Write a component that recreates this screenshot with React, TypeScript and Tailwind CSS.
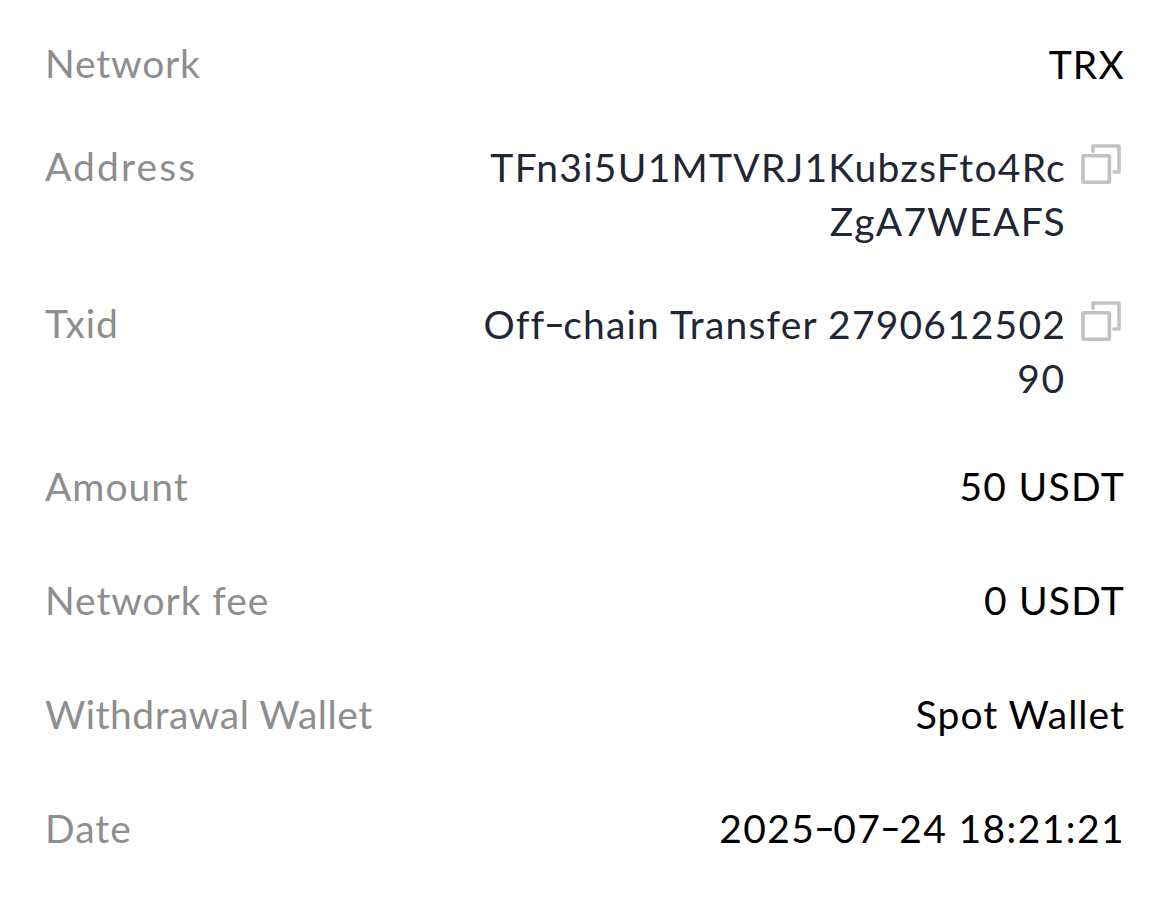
import { useState } from "react";

interface Detail {
  label: string;
  lines: string[];
  copyable?: boolean;
  rowClass: string;
  labelClass: string;
  lineClasses: string[];
}

const details: Detail[] = [
  {
    label: "Network",
    lines: ["TRX"],
    rowClass: "",
    labelClass: "-mt-px tracking-[0.8px]",
    lineClasses: ["tracking-[1.2px]"],
  },
  {
    label: "Address",
    lines: ["TFn3i5U1MTVRJ1KubzsFto4Rc", "ZgA7WEAFS"],
    copyable: true,
    rowClass: "mt-[49px]",
    labelClass: "-mt-px tracking-[2.1px]",
    lineClasses: ["-mr-px tracking-[1.27px]", "-mr-px tracking-[1.35px]"],
  },
  {
    label: "Txid",
    lines: ["Off-chain Transfer 2790612502", "90"],
    copyable: true,
    rowClass: "mt-[49px]",
    labelClass: "-mt-px tracking-[0.9px]",
    lineClasses: ["-mr-px tracking-[1.17px]", "-mr-px tracking-[1.8px]"],
  },
  {
    label: "Amount",
    lines: ["50 USDT"],
    rowClass: "mt-[54px]",
    labelClass: "tracking-[1px]",
    lineClasses: ["tracking-[1.3px]"],
  },
  {
    label: "Network fee",
    lines: ["0 USDT"],
    rowClass: "mt-[60px]",
    labelClass: "tracking-[0.9px]",
    lineClasses: ["tracking-[1.2px]"],
  },
  {
    label: "Withdrawal Wallet",
    lines: ["Spot Wallet"],
    rowClass: "mt-[60px]",
    labelClass: "tracking-[0.5px]",
    lineClasses: ["tracking-[1px]"],
  },
  {
    label: "Date",
    lines: ["2025-07-24 18:21:21"],
    rowClass: "mt-[60px]",
    labelClass: "tracking-[1px]",
    lineClasses: ["tracking-[1.4px]"],
  },
];

function CopyIcon() {
  return (
    <svg
      viewBox="0 0 40 40"
      className="block size-10"
      fill="none"
      stroke="#c2c2c2"
      strokeWidth="3.6"
      strokeLinecap="round"
      strokeLinejoin="round"
    >
      <rect x="2" y="11.8" width="26.4" height="26.4" rx="0.6" />
      <path d="M12 7.2V2H38V28H33" />
    </svg>
  );
}

// Hyphens are drawn wide and centred on the cap height
function Value({ text }: { text: string }) {
  const parts = text.split("-");
  return (
    <>
      {parts.map((part, i) => (
        <span key={i}>
          {i > 0 && (
            <span className="mx-[1.7px] inline-block -translate-y-0.5 scale-x-150 tracking-normal">
              -
            </span>
          )}
          {part}
        </span>
      ))}
    </>
  );
}

function DetailRow({ detail }: { detail: Detail }) {
  const [copied, setCopied] = useState(false);

  async function copy() {
    await navigator.clipboard.writeText(detail.lines.join(""));
    setCopied(true);
  }

  return (
    <div className={`flex items-start justify-between ${detail.rowClass}`}>
      <dt className={`text-[#8e8e8e] ${detail.labelClass}`}>{detail.label}</dt>
      <dd className="flex items-start">
        <div className={`text-right ${detail.copyable ? "text-[#1f2634]" : "text-black"}`}>
          {detail.lines.map((line, i) => (
            <div key={line} className={detail.lineClasses[i]}>
              <Value text={line} />
            </div>
          ))}
        </div>
        {detail.copyable && (
          <button
            onClick={copy}
            aria-label={copied ? "Copied" : "Copy"}
            className="mt-1 mr-1 ml-4 shrink-0 cursor-pointer"
          >
            <CopyIcon />
          </button>
        )}
      </dd>
    </div>
  );
}

export default function App() {
  return (
    <div className="h-[922px] w-[1170px] overflow-hidden bg-white pt-[37px] pr-[45px] pl-[45px] font-['Lato','Open_Sans',sans-serif] text-[39px] leading-[54px] whitespace-nowrap">
      <dl>
        {details.map((detail) => (
          <DetailRow key={detail.label} detail={detail} />
        ))}
      </dl>
    </div>
  );
}
